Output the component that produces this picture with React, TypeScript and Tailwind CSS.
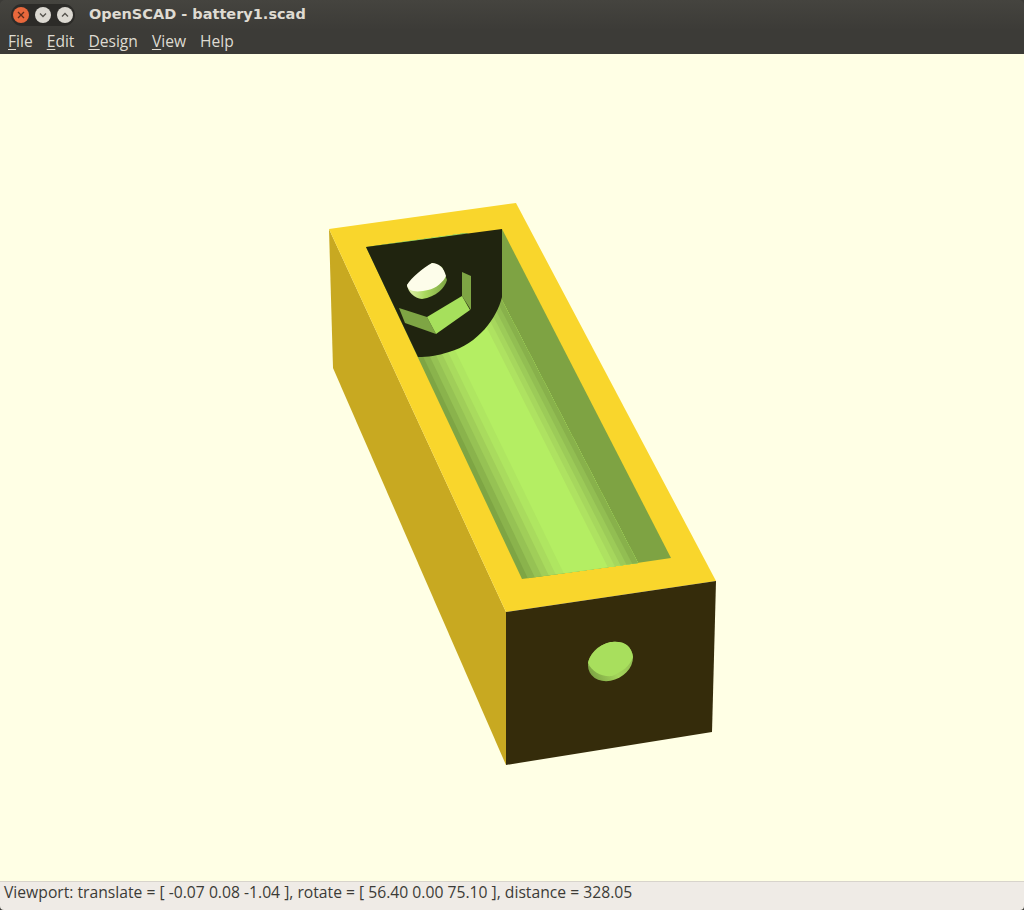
const menus = [
  { key: "F", rest: "ile" },
  { key: "E", rest: "dit" },
  { key: "D", rest: "esign" },
  { key: "V", rest: "iew" },
];

// strips of the cylinder floor, each one runs to the far side and is painted over by the next
const stripes = [
  { from: 0, fill: "#7ea544" },
  { from: 0.05, fill: "#8ab34c" },
  { from: 0.11, fill: "#96c254" },
  { from: 0.17, fill: "#a0ce59" },
  { from: 0.23, fill: "#a9db5e" },
  { from: 0.29, fill: "#afe661" },
  { from: 0.36, fill: "#b4ee63" },
  { from: 0.74, fill: "#aee261" },
  { from: 0.8, fill: "#a6d75d" },
  { from: 0.85, fill: "#9ccb58" },
  { from: 0.9, fill: "#92be52" },
  { from: 0.95, fill: "#88b14b" },
];

function lerp(a: number, b: number, t: number) {
  return a + (b - a) * t;
}

function stripePoints(from: number) {
  const bottom = (t: number) => `${lerp(522, 638, t)},${lerp(579, 563, t)}`;
  const top = (t: number) => `${lerp(366, 467, t)},${lerp(247, 233, t)}`;
  return `${top(from)} ${top(1)} ${bottom(1)} ${bottom(from)}`;
}

function BatteryModel() {
  return (
    <svg viewBox="0 54 1024 827" className="block h-full w-full" aria-hidden="true">
      <defs>
        <linearGradient id="pegSide" x1="0" y1="0" x2="1" y2="0">
          <stop offset="0" stopColor="#e6f2b4" />
          <stop offset="0.45" stopColor="#a9d85e" />
          <stop offset="1" stopColor="#7ea544" />
        </linearGradient>
        <linearGradient id="holeRim" x1="0" y1="0" x2="1" y2="0">
          <stop offset="0" stopColor="#7ea544" />
          <stop offset="0.5" stopColor="#a5d65c" />
          <stop offset="1" stopColor="#8fb94f" />
        </linearGradient>
      </defs>

      {/* outer block */}
      <polygon points="329,229 506,612 506,765 333,368" fill="#c8a921" />
      <polygon points="329,229 516,203 716,581 506,612" fill="#f9d62c" />
      <polygon points="506,612 716,581 712,732 506,765" fill="#352c0b" />

      {/* inside of the holder */}
      <polygon points="502,229 671,558 637,563 490,277" fill="#7ea343" />
      {stripes.map((s) => (
        <polygon key={s.from} points={stripePoints(s.from)} fill={s.fill} />
      ))}

      {/* back wall */}
      <path
        d="M366 247 L502 229 L502 297 C497 318 478 344 449 352 C437 356 428 357 418 357 Z"
        fill="#20240f"
      />

      {/* nut */}
      <polygon points="462,272 471,276 471,310 462,296" fill="#7ea544" />
      <polygon points="399,308 427,317 436,334 405,323" fill="#7ea544" />
      <polygon points="427,317 462,296 470,310 436,334" fill="#a6e05c" />

      {/* peg */}
      <path d="M407 285 L432 263 L442 267 L447 280 C445 288 436 297 422 299 C414 298 408 292 407 285 Z" fill="url(#pegSide)" />
      <path
        d="M407 285 C411 278 423 268 432 263 C439 263 444 268 446 276 C444 281 436 289 428 290 C420 292 408 293 407 285 Z"
        fill="#fdfdea"
      />

      {/* hole in the front */}
      <ellipse cx="610.5" cy="661.5" rx="23.5" ry="18.5" transform="rotate(-28 610.5 661.5)" fill="url(#holeRim)" />
      <path
        d="M588 663 C590 652 604 642 612 642 C624 641 631 645 633 657 C630 666 622 672 612 676 C602 677 592 672 588 663 Z"
        fill="#a8df5d"
      />
    </svg>
  );
}

export default function App() {
  return (
    <div className="flex h-[910px] w-[1024px] flex-col overflow-hidden bg-[#3c3b37] font-['Open_Sans',sans-serif]">
      {/* title bar */}
      <div className="flex h-[30px] items-center rounded-t-[5px] bg-gradient-to-b from-[#45443f] to-[#3c3b37] pl-[11px]">
        <div className="flex h-[22px] w-[64px] items-center justify-between rounded-full bg-[#2c2b28] px-[2px]">
          <span className="flex h-[16px] w-[16px] items-center justify-center rounded-full bg-[#e8683c]">
            <svg viewBox="0 0 8 8" className="h-2 w-2" fill="none" stroke="#5b2c1b" strokeWidth="1.3">
              <path d="M1 1l6 6M7 1l-6 6" />
            </svg>
          </span>
          <span className="flex h-[16px] w-[16px] items-center justify-center rounded-full bg-[#dcd9d2]">
            <svg viewBox="0 0 8 8" className="h-2 w-2" fill="none" stroke="#55534d" strokeWidth="1.3">
              <path d="M1 2.5l3 3 3-3" />
            </svg>
          </span>
          <span className="flex h-[16px] w-[16px] items-center justify-center rounded-full bg-[#dcd9d2]">
            <svg viewBox="0 0 8 8" className="h-2 w-2" fill="none" stroke="#55534d" strokeWidth="1.3">
              <path d="M1 5.5l3-3 3 3" />
            </svg>
          </span>
        </div>
        <span className="ml-[14px] font-['DejaVu_Sans',sans-serif] text-[14.5px] font-bold text-[#dfdbd2]">
          OpenSCAD - battery1.scad
        </span>
      </div>

      {/* menu bar */}
      <div className="flex h-[24px] items-start gap-[14px] bg-[#3c3b37] pl-[8px] text-[15.6px] leading-[22px] text-[#dfdbd2]">
        {menus.map((m) => (
          <span key={m.key}>
            <span className="underline underline-offset-2">{m.key}</span>
            {m.rest}
          </span>
        ))}
        <span>Help</span>
      </div>

      {/* viewport */}
      <div className="min-h-0 flex-1 bg-[#ffffe5]">
        <BatteryModel />
      </div>

      {/* status bar */}
      <div className="flex h-[29px] items-start rounded-b-[4px] border-t border-[#d8d4cc] bg-[#efebe6] pl-[4px] text-[15.7px] leading-[21px] text-[#3c3b37]">
        Viewport: translate = [ -0.07 0.08 -1.04 ], rotate = [ 56.40 0.00 75.10 ], distance = 328.05
      </div>
    </div>
  );
}
